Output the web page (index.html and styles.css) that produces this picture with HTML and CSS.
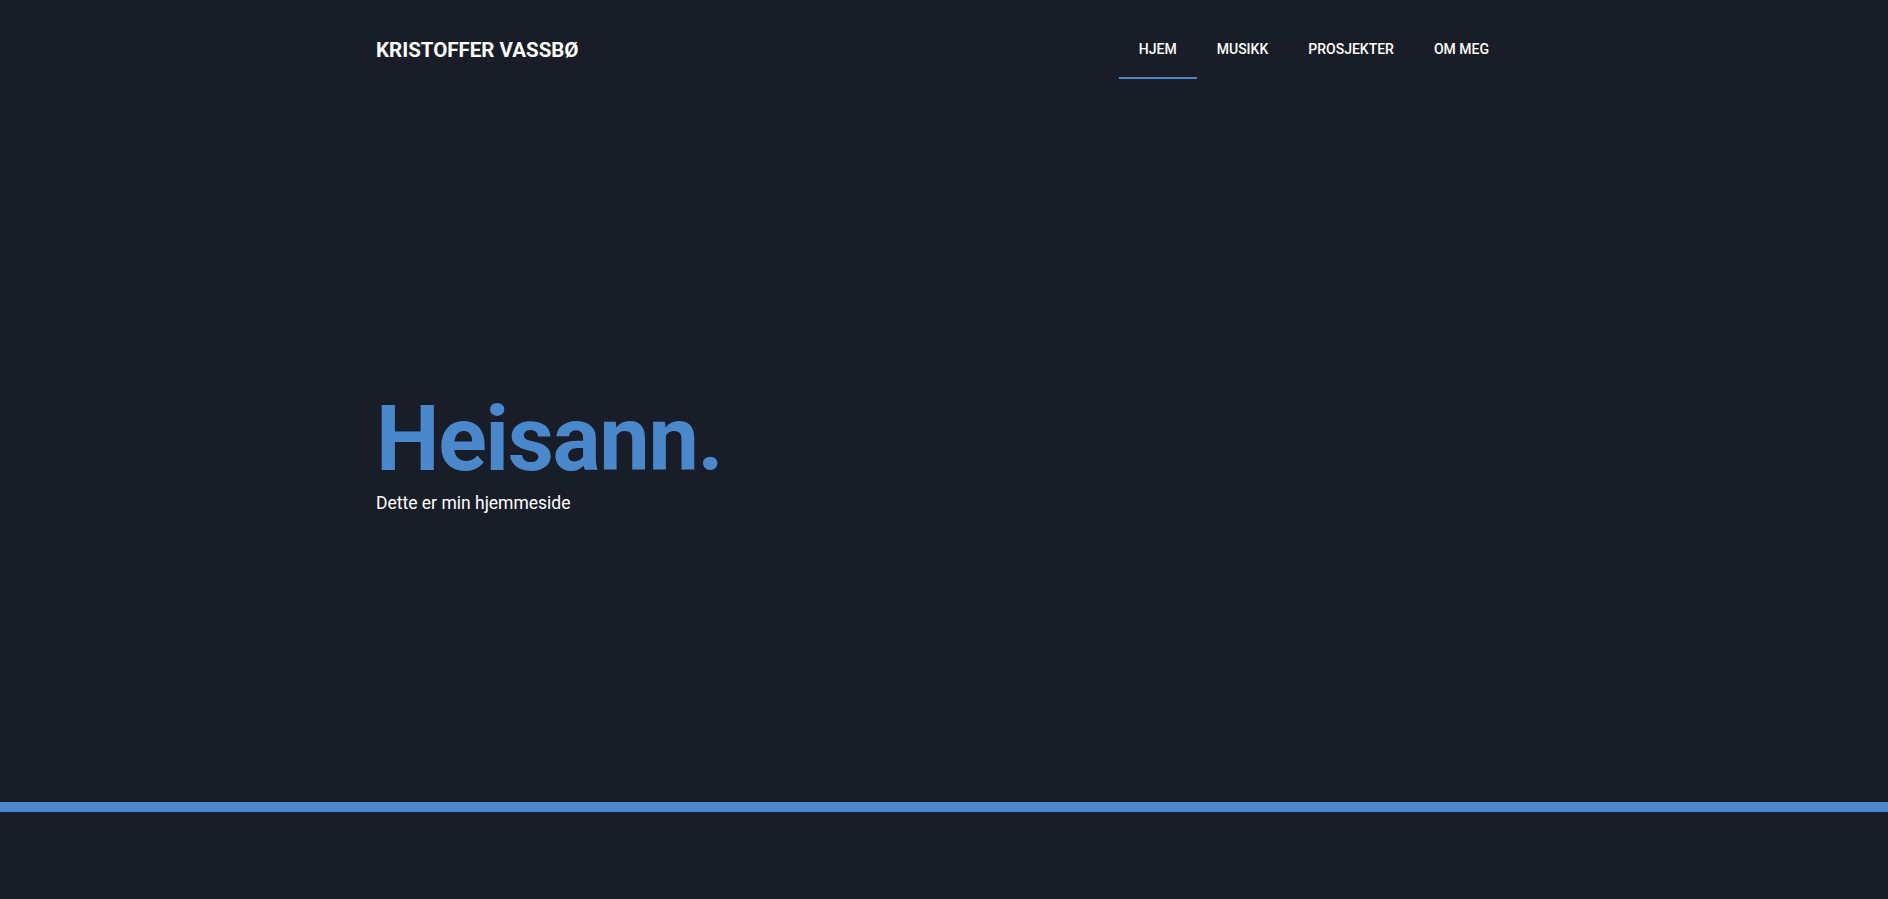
FILE: index.html
```html
<!DOCTYPE html>
<html lang="no">
<head>
<meta charset="utf-8">
<title>Kristoffer Vassbø</title>
<link rel="stylesheet" href="styles.css">
</head>
<body>
<header class="site-header">
  <div class="container header-inner">
    <a class="brand" href="#">KRISTOFFER VASSBØ</a>
    <nav class="nav">
      <a class="nav-link active" href="#">HJEM</a>
      <a class="nav-link" href="#">MUSIKK</a>
      <a class="nav-link" href="#">PROSJEKTER</a>
      <a class="nav-link" href="#">OM MEG</a>
    </nav>
  </div>
</header>
<section class="hero">
  <div class="container">
    <h1 class="hero-title">Heisann.</h1>
    <p class="hero-sub">Dette er min hjemmeside</p>
  </div>
</section>
<div class="divider"></div>
<div class="below"></div>
</body>
</html>
```
FILE: styles.css
```css
* { box-sizing: border-box; }
html, body {
  margin: 0;
  padding: 0;
  background: #191d27;
  color: #ffffff;
  font-family: Roboto, "Liberation Sans", sans-serif;
}
.container {
  width: 1136px;
  margin: 0 auto;
}
.site-header {
  height: 80px;
}
.header-inner {
  display: flex;
  justify-content: space-between;
  align-items: flex-start;
  height: 80px;
}
.brand {
  color: #fff;
  text-decoration: none;
  font-weight: 700;
  font-size: 20.5px;
  display: flex;
  align-items: center;
  height: 80px;
  padding-top: 20px;
}
.nav {
  display: flex;
  align-items: flex-start;
  margin-right: 3px;
}
.nav-link {
  color: #fff;
  text-decoration: none;
  font-size: 14px;
  font-weight: 500;
  padding: 20px 20px 0;
  display: flex;
  align-items: center;
  border-bottom: 2px solid transparent;
  height: 79px;
}
.nav-link.active {
  border-bottom-color: #4f87c9;
}
.hero {
  height: 722px;
  padding-top: 315px;
}
.hero-title {
  margin: 0;
  font-size: 90px;
  line-height: 1;
  font-weight: 700;
  color: #4a88cc;
  letter-spacing: -1.4px;
}
.hero-sub {
  margin: 5px 0 0;
  font-size: 17.5px;
  line-height: 27px;
}
.divider {
  height: 10px;
  background: #4c88cc;
}
.below {
  height: 87px;
}
```
